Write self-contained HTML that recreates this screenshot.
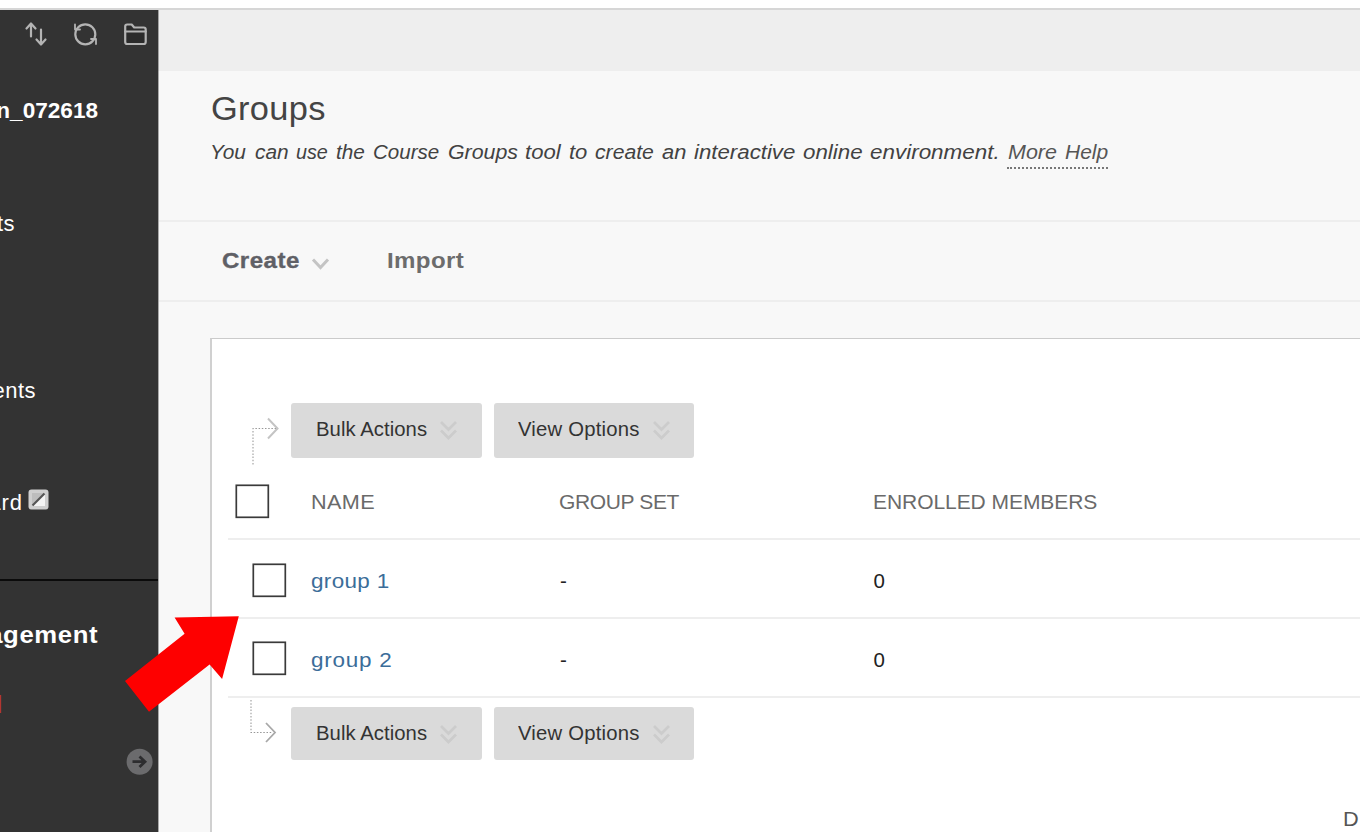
<!DOCTYPE html>
<html lang="en">
<head>
<meta charset="utf-8">
<title>Groups</title>
<style>
*{box-sizing:border-box;margin:0;padding:0}
html,body{width:1360px;height:832px;overflow:hidden;background:#fff}
body{position:relative;font-family:"Liberation Sans",sans-serif;color:#333}
.abs{position:absolute;white-space:nowrap}
#topline{left:0;top:8px;width:1360px;height:2px;background:#d6d6d6}
#side{left:0;top:10px;width:158px;height:822px;background:#333;overflow:hidden}
#topbar{left:158px;top:10px;width:1202px;height:62px;background:#eee;border-bottom:1px solid #f2f2f2}
#main{left:158px;top:71px;width:1202px;height:761px;background:#f8f8f8}
.hl{left:159px;width:1202px;height:2px;background:#eeeeee}
#box{left:210px;top:338px;width:1200px;height:600px;background:#fff;border:1px solid #cbcbcb;border-left:2px solid #d0d0d0}
.st{color:#fff;font-size:22px;text-align:right;letter-spacing:.5px}
.sb{font-weight:bold}
.btn{background:#dadada;border-radius:3px;height:54.500px}
.btxt{font-size:19.5px;color:#333;letter-spacing:.05px;transform:scaleX(1.04);transform-origin:0 0}
.th{font-size:21px;color:#6a6a6a}
.cb{width:34px;height:34px;border:2px solid #464646;background:#fff}
.rl{left:228px;width:1140px;height:2px;background:#eeeeee}
.lnk{color:#3b6d99;font-size:21px;letter-spacing:.32px;transform:scaleX(1.07);transform-origin:0 0}
.sub span{position:absolute;top:0;font-size:20px;font-style:italic;color:#424242;transform-origin:0 0;white-space:nowrap}
.td{font-size:20.5px;color:#222}
</style>
</head>
<body>
<div class="abs" id="topline"></div>
<div class="abs" id="topbar"></div>
<div class="abs" id="main"></div>
<div class="abs hl" style="top:220px"></div>
<div class="abs hl" style="top:300px"></div>

<div class="abs" id="side">
  <svg class="abs" style="left:22px;top:9px" width="130" height="30" viewBox="0 0 130 30" fill="none" stroke="#b4b4b4" stroke-width="2.2" stroke-linecap="round" stroke-linejoin="round">
    <path d="M9 17.500V5M4.5 9.5L9 4.5L13.500 9.500"/><path d="M19 10.500V25M14.5 20.500L19 25.500L23.500 20.500"/>
    <circle cx="63.300" cy="15.300" r="10"/><path d="M53 5.500V10.500H58" stroke-width="1.800"/><path d="M74 25V20H69" stroke-width="1.800"/>
    <g transform="translate(0.7,1)"><path d="M102.500 6.500Q102.500 4.500 104.500 4.500H109L111.500 7.500H121Q123 7.500 123 9.500V22Q123 24 121 24H104.500Q102.500 24 102.500 22Z" fill="#2b2b2b"/><path d="M102.500 11.500H123"/></g>
  </svg>
  <div class="abs st sb" style="right:60.500px;top:89px;font-size:21.5px;letter-spacing:0;transform:scaleX(1.05);transform-origin:100% 0">Course_Mahon_072618</div>
  <div class="abs st" style="right:143px;top:201px">Announcements</div>
  <div class="abs st" style="right:122px;top:368px">Assignments</div>
  <div class="abs st" style="right:135px;top:480px;letter-spacing:1px">Discussion Board</div>
  <svg class="abs" style="left:28px;top:479px" width="21" height="21" viewBox="0 0 21 21"><rect x=".5" y=".5" width="20" height="20" rx="3" fill="#cfcfcf"/><path d="M4 4H17V17H4Z" fill="#f4f4f4"/><path d="M4 4H17L4 17Z" fill="#bdbdbd"/><path d="M4.500 16.500L16.500 4.500" stroke="#555" stroke-width="2.200"/></svg>
  <div class="abs" style="left:0;top:569px;width:158px;height:2px;background:#0b0b0b"></div>
  <div class="abs st sb" style="right:59.500px;top:611px;font-size:24px;letter-spacing:.6px;transform:scaleX(1.07);transform-origin:100% 0">Course Management</div>
  <div class="abs st" style="right:155px;top:681px;color:#b8382f;font-size:24px;font-weight:bold">Control Panel</div>
  <svg class="abs" style="left:126px;top:738px" width="28" height="28" viewBox="0 0 28 28"><circle cx="13.600" cy="13.700" r="13" fill="#6b6b6d"/><path d="M6.500 13.700H18.500M13.500 8.500L19 13.700L13.500 19" fill="none" stroke="#2d2d2f" stroke-width="2.800"/></svg>
</div>

<div class="abs" style="left:211px;top:90px;font-size:33px;color:#444;letter-spacing:.3px;transform:scaleX(1.042);transform-origin:0 0">Groups</div>
<div class="abs sub" style="left:0;top:141px;width:1360px;height:30px"><span style="left:210.4px;transform:scaleX(1.043)">You</span> <span style="left:254.5px;transform:scaleX(1.043)">can</span> <span style="left:296.2px;transform:scaleX(0.988)">use</span> <span style="left:336.2px;transform:scaleX(1.039)">the</span> <span style="left:372.7px;transform:scaleX(1.026)">Course</span> <span style="left:447.5px;transform:scaleX(1.067)">Groups</span> <span style="left:525.0px;transform:scaleX(1.105)">tool</span> <span style="left:568.8px;transform:scaleX(1.102)">to</span> <span style="left:595.0px;transform:scaleX(1.059)">create</span> <span style="left:662.0px;transform:scaleX(1.096)">an</span> <span style="left:693.8px;transform:scaleX(1.112)">interactive</span> <span style="left:803.0px;transform:scaleX(1.117)">online</span> <span style="left:870.0px;transform:scaleX(1.122)">environment.</span> <span style="left:1007.5px;transform:scaleX(1.073);color:#555">More</span> <span style="left:1065.0px;transform:scaleX(1.049);color:#555">Help</span></div>
<div class="abs" style="left:1007px;top:167px;width:101px;height:0;border-top:2px dotted #777"></div>

<div class="abs" style="left:222px;top:248px;font-size:22.5px;font-weight:bold;color:#5f6066;-webkit-text-stroke:.35px #5f6066;letter-spacing:.45px;transform:scaleX(1.07);transform-origin:0 0">Create</div>
<svg class="abs" style="left:311px;top:257px" width="20" height="14" viewBox="0 0 20 14"><path d="M2 2.500L9.500 10.500L17 2.500" fill="none" stroke="#c4c4c4" stroke-width="3"/></svg>
<div class="abs" style="left:387px;top:248px;font-size:22.5px;font-weight:bold;color:#6c6c6c;letter-spacing:.35px;transform:scaleX(1.07);transform-origin:0 0">Import</div>

<div class="abs" style="left:158px;top:10px;width:1px;height:822px;background:rgba(51,51,51,.4)"></div>
<div class="abs" id="box"></div>

<!-- top action bar -->
<svg class="abs" style="left:246px;top:414px" width="36" height="54" viewBox="0 0 36 54" fill="none"><path d="M7 50.500V14.500H31" stroke="#979797" stroke-width="1.050" stroke-dasharray="1.500 1.700"/><path d="M22 4.500L31.500 14.500L22 24.500" stroke="#c4c4c4" stroke-width="2"/></svg>
<div class="abs btn" style="left:291px;top:403px;width:191px"></div>
<div class="abs btxt" style="left:316px;top:418px">Bulk Actions</div>
<svg class="abs chev" style="left:438px;top:419px" width="22" height="24" viewBox="0 0 22 24" fill="none" stroke="#cccccc" stroke-width="2.800"><path d="M3 3L10.500 10.500L18 3"/><path d="M3 11.500L10.500 19L18 11.500"/></svg>
<div class="abs btn" style="left:494px;top:403px;width:200px"></div>
<div class="abs btxt" style="left:518px;top:418px;letter-spacing:.2px">View Options</div>
<svg class="abs chev" style="left:651px;top:419px" width="22" height="24" viewBox="0 0 22 24" fill="none" stroke="#cccccc" stroke-width="2.800"><path d="M3 3L10.500 10.500L18 3"/><path d="M3 11.500L10.500 19L18 11.500"/></svg>

<!-- header -->
<svg class="abs" style="left:235px;top:484px" width="36" height="36" viewBox="0 0 36 36"><rect x="1.300" y="1.300" width="32" height="32" fill="#fff" stroke="#3a3a3a" stroke-width="1.700"/></svg>
<div class="abs th" style="left:310.500px;top:490px;letter-spacing:.39px;transform:scaleX(1.03);transform-origin:0 0">NAME</div>
<div class="abs th" style="left:559px;top:490px;letter-spacing:-.36px">GROUP SET</div>
<div class="abs th" style="left:873px;top:490px;letter-spacing:-.06px">ENROLLED MEMBERS</div>
<div class="abs rl" style="top:538px"></div>

<!-- rows -->
<svg class="abs" style="left:252px;top:563px" width="36" height="36" viewBox="0 0 36 36"><rect x="1.300" y="1.300" width="32" height="32" fill="#fff" stroke="#3a3a3a" stroke-width="1.700"/></svg>
<div class="abs lnk" style="left:311px;top:569px">group 1</div>
<div class="abs td" style="left:560px;top:569px">-</div>
<div class="abs td" style="left:873.500px;top:569px">0</div>
<div class="abs rl" style="top:617px"></div>

<svg class="abs" style="left:252px;top:641px" width="36" height="36" viewBox="0 0 36 36"><rect x="1.300" y="1.300" width="32" height="32" fill="#fff" stroke="#3a3a3a" stroke-width="1.700"/></svg>
<div class="abs lnk" style="left:311px;top:648px;letter-spacing:.72px">group 2</div>
<div class="abs td" style="left:560px;top:648px">-</div>
<div class="abs td" style="left:873.500px;top:648px">0</div>
<div class="abs rl" style="top:696px"></div>

<!-- bottom action bar -->
<svg class="abs" style="left:243.500px;top:698px" width="36" height="54" viewBox="0 0 36 54" fill="none"><path d="M7 2V34.500H28" stroke="#979797" stroke-width="1.050" stroke-dasharray="1.500 1.700"/><path d="M22 25L31 34.500L22 44" stroke="#a8a8a8" stroke-width="1.800"/></svg>
<div class="abs btn" style="left:291px;top:707px;width:191px;height:53px"></div>
<div class="abs btxt" style="left:316px;top:722px">Bulk Actions</div>
<svg class="abs chev" style="left:438px;top:723px" width="22" height="24" viewBox="0 0 22 24" fill="none" stroke="#cccccc" stroke-width="2.800"><path d="M3 3L10.500 10.500L18 3"/><path d="M3 11.500L10.500 19L18 11.500"/></svg>
<div class="abs btn" style="left:494px;top:707px;width:200px;height:53px"></div>
<div class="abs btxt" style="left:518px;top:722px;letter-spacing:.2px">View Options</div>
<svg class="abs chev" style="left:651px;top:723px" width="22" height="24" viewBox="0 0 22 24" fill="none" stroke="#cccccc" stroke-width="2.800"><path d="M3 3L10.500 10.500L18 3"/><path d="M3 11.500L10.500 19L18 11.500"/></svg>

<div class="abs" style="left:1343px;top:807px;font-size:20.5px;color:#555;letter-spacing:3px;transform:scaleX(1.06);transform-origin:0 0">Displaying</div>

<!-- red arrow -->
<svg class="abs" style="left:120px;top:610px" width="125" height="108" viewBox="120 610 125 108"><polygon points="238.800,616.200 174.600,617.500 184.600,633.800 125,681 149,711.700 209.600,664.600 222.100,679" fill="#fe0000"/></svg>
</body>
</html>
